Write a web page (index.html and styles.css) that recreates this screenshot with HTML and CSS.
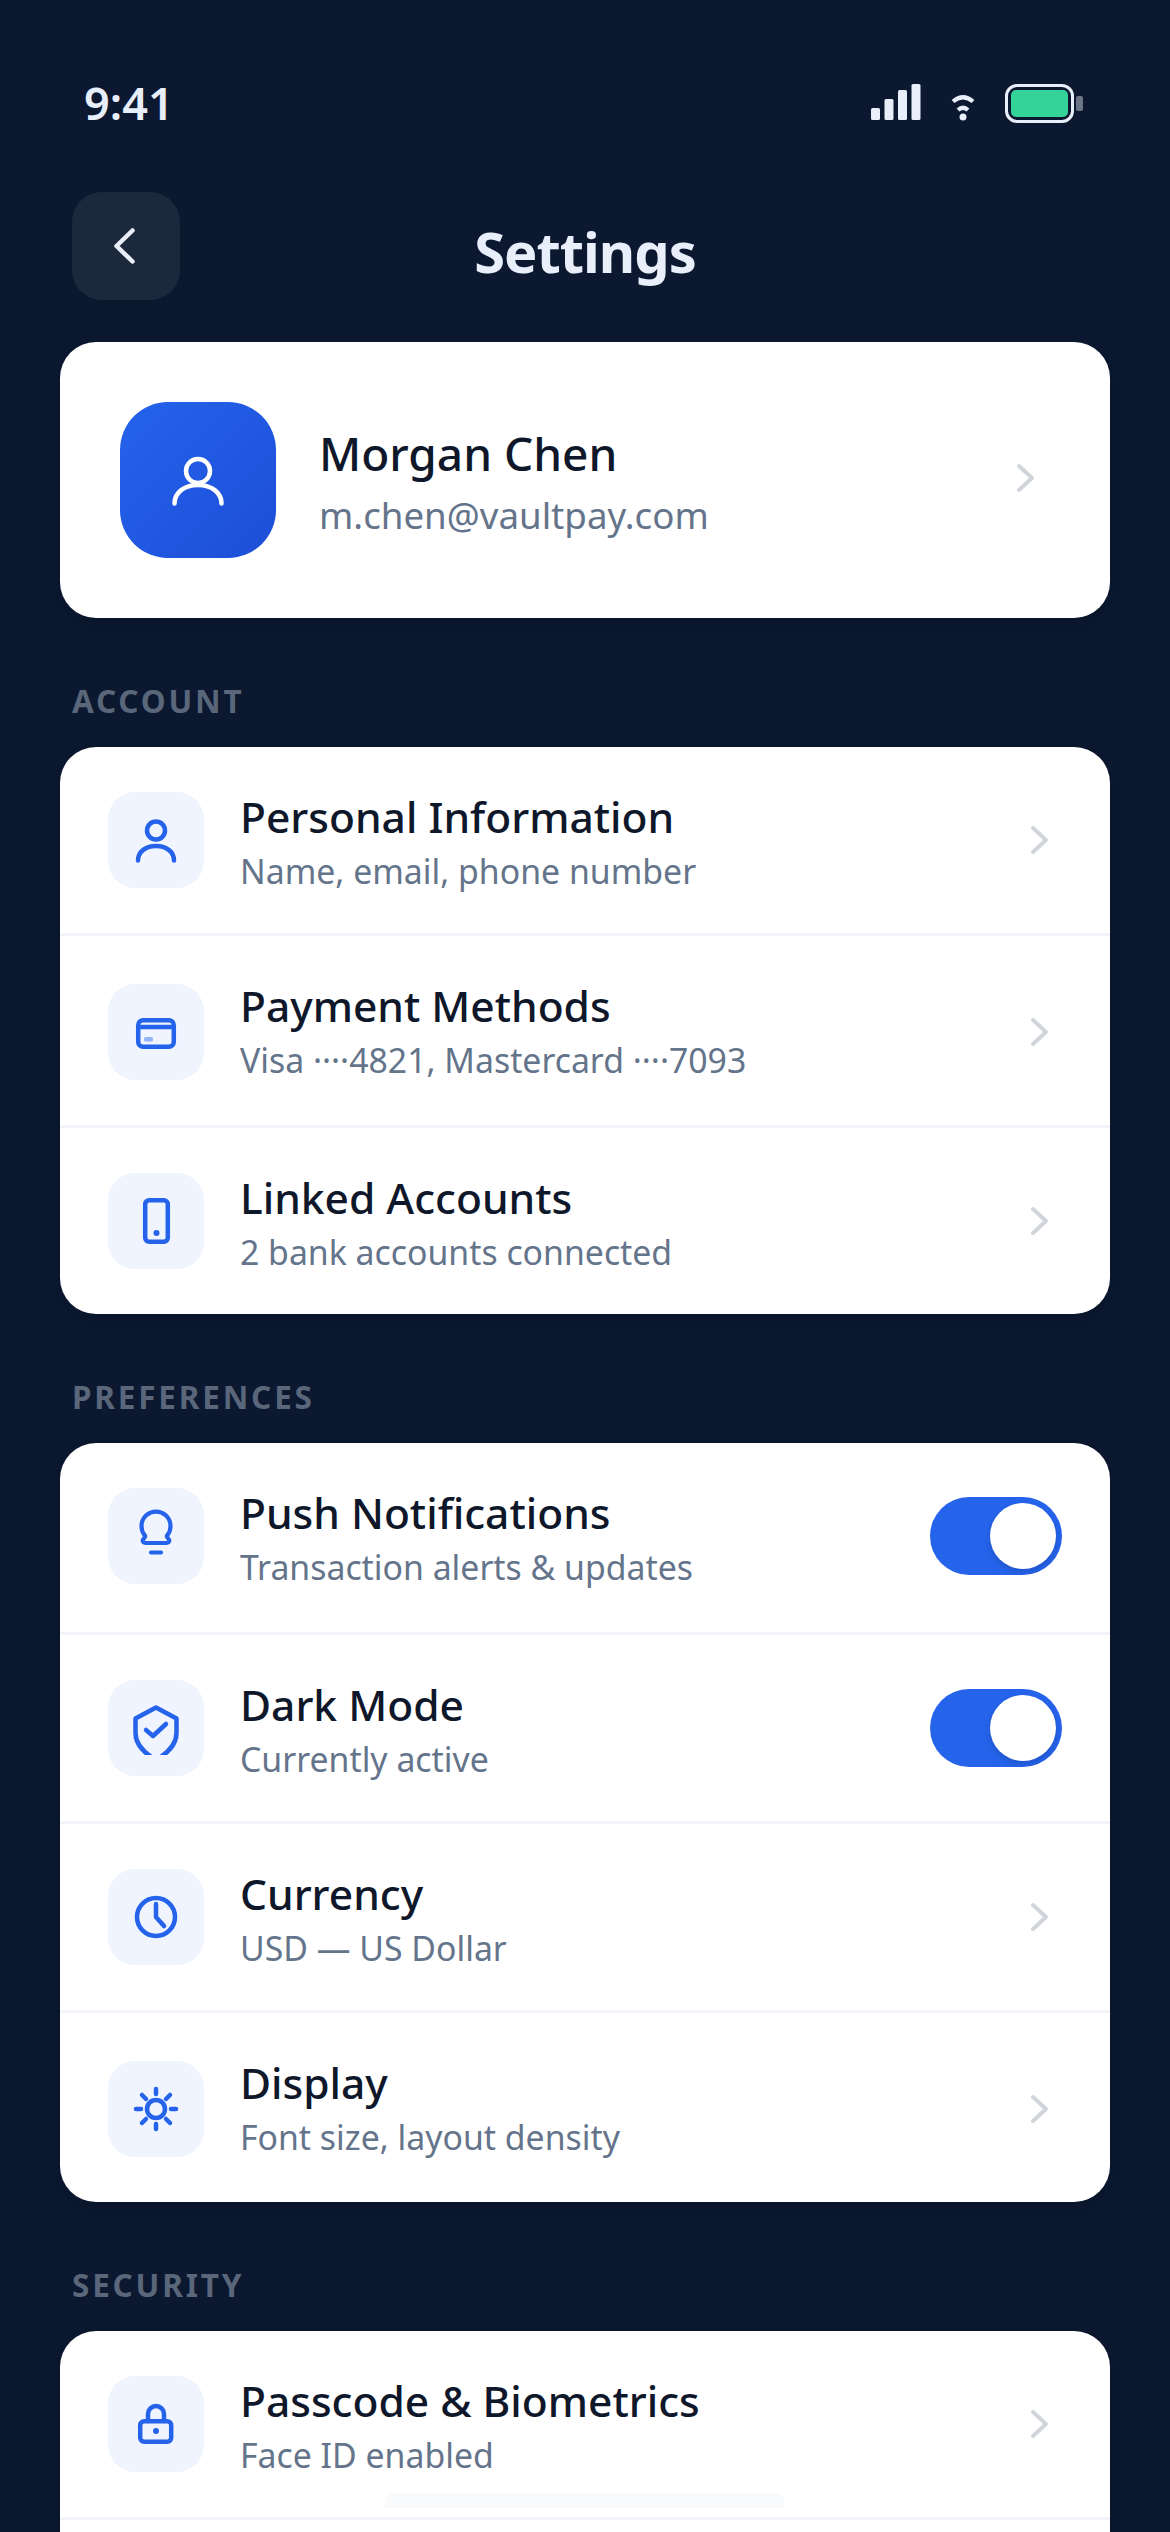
FILE: index.html
```html
<!DOCTYPE html>
<html lang="en">
<head>
    <meta charset="UTF-8">
    <meta name="viewport" content="width=device-width, initial-scale=1.0">
    <title>Settings</title>
    <link rel="stylesheet" href="styles.css">
</head>
<body>
<div class="screen">
    <div class="status-bar">
        <span class="time">9:41</span>
        <div class="status-icons">
            <svg class="signal" width="50" height="36" viewBox="0 0 50 36" fill="#e8eefa">
                <rect x="0" y="24" width="9" height="12" rx="1.5"/>
                <rect x="13.500" y="15" width="9" height="21" rx="1.5"/>
                <rect x="27" y="6" width="9" height="30" rx="1.5"/>
                <rect x="40.500" y="0" width="9" height="36" rx="1.5"/>
            </svg>
            <svg class="wifi" width="24" height="27" viewBox="0 0 24 27" fill="none" stroke="#e8eefa" stroke-width="4.2">
                <path d="M2 7.500Q12-1 22 7.500"/>
                <path d="M7 16Q12 11.500 17 16"/>
                <circle cx="12" cy="23" r="3.500" fill="#e8eefa" stroke="none"/>
            </svg>
            <div class="battery">
                <div class="battery-body"><div class="battery-fill"></div></div>
                <div class="battery-tip"></div>
            </div>
        </div>
    </div>

    <header class="nav">
        <button class="back" type="button">
            <svg width="42" height="42" viewBox="0 0 42 42" fill="none" stroke="#e8eefa" stroke-width="4.5" stroke-linecap="round" stroke-linejoin="round">
                <path d="M27.500 5.500 11.500 21l16 15.500"/>
            </svg>
        </button>
        <h1>Settings</h1>
    </header>

    <section class="card profile">
        <div class="avatar">
            <svg width="60" height="60" viewBox="0 0 60 60" fill="none" stroke="#fff" stroke-width="4.5" stroke-linecap="round">
                <circle cx="30" cy="21" r="12"/>
                <path d="M6.500 53.500c0-11 10-18.500 23.500-18.500s23.500 7.500 23.500 18.500"/>
            </svg>
        </div>
        <div class="profile-text">
            <div class="profile-name">Morgan Chen</div>
            <div class="profile-email">m.chen@vaultpay.com</div>
        </div>
        <svg class="chevron" width="20" height="30" viewBox="0 0 20 30" fill="none" stroke="#d1d5db" stroke-width="4" stroke-linecap="round" stroke-linejoin="round">
            <path d="M3 3l13 12L3 27"/>
        </svg>
    </section>

    <div class="section-label">ACCOUNT</div>
    <section class="card">
        <div class="row">
            <div class="row-icon">
                <svg width="60" height="60" viewBox="0 0 60 60" fill="none" stroke="#2563eb" stroke-width="4.5" stroke-linecap="round">
                    <circle cx="30" cy="20.500" r="9"/>
                    <path d="M12 50.500c0-9 8-14.500 18-14.500s18 5.500 18 14.500"/>
                </svg>
            </div>
            <div class="row-text">
                <div class="row-title">Personal Information</div>
                <div class="row-sub">Name, email, phone number</div>
            </div>
            <svg class="chevron" width="20" height="30" viewBox="0 0 20 30" fill="none" stroke="#d1d5db" stroke-width="4" stroke-linecap="round" stroke-linejoin="round"><path d="M3 3l13 12L3 27"/></svg>
        </div>
        <div class="row pad-top">
            <div class="row-icon">
                <svg width="60" height="60" viewBox="0 0 60 60" fill="none" stroke="#2563eb" stroke-width="4.500">
                    <rect x="12.200" y="18.200" width="35.600" height="26.600" rx="5"/>
                    <path d="M12 25h36"/>
                    <rect x="18" y="35" width="9" height="4.500" rx="1.500" fill="#93b4f8" stroke="none"/>
                </svg>
            </div>
            <div class="row-text">
                <div class="row-title">Payment Methods</div>
                <div class="row-sub">Visa ····4821, Mastercard ····7093</div>
            </div>
            <svg class="chevron" width="20" height="30" viewBox="0 0 20 30" fill="none" stroke="#d1d5db" stroke-width="4" stroke-linecap="round" stroke-linejoin="round"><path d="M3 3l13 12L3 27"/></svg>
        </div>
        <div class="row">
            <div class="row-icon">
                <svg width="60" height="60" viewBox="0 0 60 60" fill="none" stroke="#2563eb" stroke-width="4.500">
                    <rect x="19.200" y="9.200" width="22.600" height="41.600" rx="4"/>
                    <circle cx="30.500" cy="42" r="3" fill="#2563eb" stroke="none"/>
                </svg>
            </div>
            <div class="row-text">
                <div class="row-title">Linked Accounts</div>
                <div class="row-sub">2 bank accounts connected</div>
            </div>
            <svg class="chevron" width="20" height="30" viewBox="0 0 20 30" fill="none" stroke="#d1d5db" stroke-width="4" stroke-linecap="round" stroke-linejoin="round"><path d="M3 3l13 12L3 27"/></svg>
        </div>
    </section>

    <div class="section-label">PREFERENCES</div>
    <section class="card">
        <div class="row pad-bottom">
            <div class="row-icon">
                <svg width="60" height="60" viewBox="0 0 60 60" fill="none" stroke="#2563eb" stroke-width="4.200" stroke-linecap="round" stroke-linejoin="round">
                    <path d="M19 29.500A14.500 14.500 0 1 1 41 29.500c-.5 1 0 2 1.500 3.500 1.500 1.500.5 4-1.500 4H19c-2 0-3-2.500-1.500-4 1.500-1.500 2-2.500 1.500-3.500z"/>
                    <path d="M25 46.500h10"/>
                </svg>
            </div>
            <div class="row-text">
                <div class="row-title">Push Notifications</div>
                <div class="row-sub">Transaction alerts &amp; updates</div>
            </div>
            <div class="toggle"><div class="knob"></div></div>
        </div>
        <div class="row">
            <div class="row-icon">
                <svg class="shield" width="60" height="57" viewBox="0 0 60 57" fill="none" stroke="#2563eb" stroke-width="4.500" stroke-linecap="round" stroke-linejoin="round">
                    <path d="M30 9.500 50.500 20.500V35C50.500 48 40 56 30 62 20 56 9.500 48 9.500 35V20.500z"/>
                    <path d="M20 32l7 6 13-12"/>
                </svg>
            </div>
            <div class="row-text">
                <div class="row-title">Dark Mode</div>
                <div class="row-sub">Currently active</div>
            </div>
            <div class="toggle"><div class="knob"></div></div>
        </div>
        <div class="row">
            <div class="row-icon">
                <svg width="60" height="60" viewBox="0 0 60 60" fill="none" stroke="#2563eb" stroke-width="4.500" stroke-linecap="round" stroke-linejoin="round">
                    <circle cx="30" cy="30" r="19"/>
                    <path d="M30 17v13l8 9"/>
                </svg>
            </div>
            <div class="row-text">
                <div class="row-title">Currency</div>
                <div class="row-sub">USD — US Dollar</div>
            </div>
            <svg class="chevron" width="20" height="30" viewBox="0 0 20 30" fill="none" stroke="#d1d5db" stroke-width="4" stroke-linecap="round" stroke-linejoin="round"><path d="M3 3l13 12L3 27"/></svg>
        </div>
        <div class="row pad-top">
            <div class="row-icon">
                <svg width="60" height="60" viewBox="0 0 60 60" fill="none" stroke="#2563eb" stroke-width="4.500" stroke-linecap="round">
                    <circle cx="30" cy="30" r="9"/>
                    <path d="M30 10v5M30 45v5M10 30h5M45 30h5M16 16l4 4M40 40l4 4M44 16l-4 4M20 40l-4 4"/>
                </svg>
            </div>
            <div class="row-text">
                <div class="row-title">Display</div>
                <div class="row-sub">Font size, layout density</div>
            </div>
            <svg class="chevron" width="20" height="30" viewBox="0 0 20 30" fill="none" stroke="#d1d5db" stroke-width="4" stroke-linecap="round" stroke-linejoin="round"><path d="M3 3l13 12L3 27"/></svg>
        </div>
    </section>

    <div class="section-label">SECURITY</div>
    <section class="card">
        <div class="row">
            <div class="row-icon">
                <svg width="60" height="60" viewBox="0 0 60 60" fill="none" stroke="#2563eb" stroke-width="4.500" stroke-linecap="round" stroke-linejoin="round">
                    <rect x="14.200" y="27.200" width="31" height="20.600" rx="4"/>
                    <path d="M22 27v-7a8 8 0 0 1 16 0v7"/>
                    <circle cx="30" cy="37" r="3" fill="#2563eb" stroke="none"/>
                </svg>
            </div>
            <div class="row-text">
                <div class="row-title">Passcode &amp; Biometrics</div>
                <div class="row-sub">Face ID enabled</div>
            </div>
            <svg class="chevron" width="20" height="30" viewBox="0 0 20 30" fill="none" stroke="#d1d5db" stroke-width="4" stroke-linecap="round" stroke-linejoin="round"><path d="M3 3l13 12L3 27"/></svg>
        </div>
        <div class="row row-cut"></div>
    </section>

    <div class="home-bar"></div>
</div>
</body>
</html>
```

FILE: styles.css
```css
* {
    box-sizing: border-box;
}
html, body {
    margin: 0;
    padding: 0;
}
body {
    background: #0b1830;
    font-family: "Noto Sans", "Open Sans", sans-serif;
    color: #0f172a;
}
.screen {
    position: relative;
    width: 1170px;
    height: 2532px;
    overflow: hidden;
    padding: 0 60px;
    background: #0b1830;
}

/* status bar */
.status-bar {
    display: flex;
    justify-content: space-between;
    align-items: center;
    height: 60px;
    margin-top: 75px;
    padding: 0 27px 0 24px;
}
.time {
    margin-bottom: 5px;
    font-size: 45px;
    font-weight: 600;
    line-height: 60px;
    color: #e8eefa;
}
.status-icons {
    display: flex;
    align-items: flex-start;
    gap: 30px;
    margin-bottom: 3px;
}
.wifi {
    margin-top: 10px;
}
.battery {
    display: flex;
    align-items: center;
    gap: 2px;
}
.battery-body {
    width: 69px;
    height: 39px;
    padding: 3px;
    border: 3px solid #e8eefa;
    border-radius: 12px;
}
.battery-fill {
    width: 100%;
    height: 100%;
    background: #34d399;
    border-radius: 5px;
}
.battery-tip {
    width: 7px;
    height: 15px;
    background: #6b7587;
    border-radius: 2px;
}

/* nav */
.nav {
    position: relative;
    display: flex;
    align-items: flex-start;
    justify-content: center;
    height: 108px;
    margin-top: 57px;
    margin-bottom: 42px;
}
.back {
    position: absolute;
    left: 12px;
    top: 0;
    display: flex;
    align-items: center;
    justify-content: center;
    width: 108px;
    height: 108px;
    padding: 0;
    border: none;
    border-radius: 30px;
    background: #1c283c;
}
.nav h1 {
    margin: 0;
    padding-top: 5px;
    font-size: 56px;
    font-weight: 700;
    letter-spacing: -1px;
    line-height: 108px;
    color: #e8eefa;
}

/* cards */
.card {
    background: #fff;
    border-radius: 36px;
    overflow: hidden;
    box-shadow: 0 6px 24px rgba(0, 0, 0, 0.15);
}
.profile {
    display: flex;
    align-items: center;
    height: 276px;
    padding: 0 62px 0 60px;
}
.profile .chevron {
    margin-right: 12px;
    margin-bottom: 4px;
}
.avatar {
    display: flex;
    align-items: center;
    justify-content: center;
    flex-shrink: 0;
    width: 156px;
    height: 156px;
    margin-right: 43px;
    border-radius: 48px;
    background: linear-gradient(135deg, #2563eb, #1d4ed8);
}
.profile-text {
    flex: 1;
    margin-top: 3px;
}
.profile-name {
    font-size: 46px;
    font-weight: 500;
    line-height: 63px;
}
.profile-email {
    margin-top: 5px;
    font-size: 36.7px;
    line-height: 51px;
    color: #64748b;
}
.section-label {
    height: 129px;
    padding: 60px 12px 0;
    font-size: 31.5px;
    font-weight: 700;
    letter-spacing: 2.8px;
    line-height: 45px;
    color: #5a667a;
}

/* rows */
.row {
    display: flex;
    align-items: center;
    gap: 36px;
    padding: 39px 48px;
    border-bottom: 3px solid #f1f5f9;
}
.row:last-child {
    border-bottom: none;
}
/* these rows are 3px taller, the icon sits lower but the text does not move */
.row.pad-top {
    padding-bottom: 42px;
}
.row.pad-top .row-icon,
.row.pad-top .chevron {
    margin-top: 6px;
}
.row.pad-bottom {
    padding-bottom: 42px;
}
.row-cut {
    height: 186px;
}
.row-icon {
    display: flex;
    align-items: center;
    justify-content: center;
    flex-shrink: 0;
    width: 96px;
    height: 96px;
    border-radius: 27px;
    background: #eff4ff;
}
.shield {
    margin-bottom: 3px;
}
.row-text {
    flex: 1;
    min-width: 0;
}
.row-title {
    font-size: 42.5px;
    font-weight: 500;
    line-height: 61px;
}
.row-sub {
    margin-top: 2px;
    font-size: 33.8px;
    line-height: 45px;
    color: #64748b;
}
.chevron {
    flex-shrink: 0;
    margin-right: 12px;
}
.toggle {
    display: flex;
    justify-content: flex-end;
    flex-shrink: 0;
    width: 132px;
    height: 78px;
    padding: 6px;
    border-radius: 39px;
    background: #2563eb;
}
.knob {
    width: 66px;
    height: 66px;
    border-radius: 50%;
    background: #fff;
    box-shadow: 0 3px 6px rgba(0, 0, 0, 0.15);
}
.home-bar {
    position: absolute;
    left: 385px;
    top: 2493px;
    width: 400px;
    height: 15px;
    border-radius: 9px 9px 0 0;
    background: #f8fafc;
}
```
